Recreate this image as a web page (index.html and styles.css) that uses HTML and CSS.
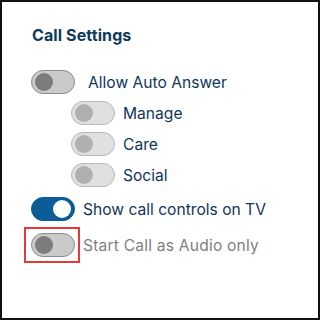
FILE: index.html
```html
<!DOCTYPE html>
<html>
<head>
<meta charset="utf-8">
<link rel="stylesheet" href="styles.css">
</head>
<body>
<div class="frame">
  <h2 class="title">Call Settings</h2>
  <div class="row row-first">
    <span class="toggle"><span class="knob"></span></span>
    <span class="label label-wide">Allow Auto Answer</span>
  </div>
  <div class="row sub">
    <span class="toggle disabled"><span class="knob"></span></span>
    <span class="label">Manage</span>
  </div>
  <div class="row sub">
    <span class="toggle disabled"><span class="knob"></span></span>
    <span class="label">Care</span>
  </div>
  <div class="row sub">
    <span class="toggle disabled"><span class="knob"></span></span>
    <span class="label">Social</span>
  </div>
  <div class="row row-show">
    <span class="toggle on"><span class="knob"></span></span>
    <span class="label">Show call controls on TV</span>
  </div>
  <div class="row row-audio">
    <span class="highlight"><span class="toggle"><span class="knob"></span></span></span>
    <span class="label muted">Start Call as Audio only</span>
  </div>
</div>
</body>
</html>
```
FILE: styles.css
```css
html, body {
  margin: 0;
  padding: 0;
  background: #ffffff;
}
.frame {
  box-sizing: border-box;
  width: 320px;
  height: 320px;
  border: 2px solid #111111;
  padding: 0 0 0 29px;
  font-family: "Inter", "DejaVu Sans", sans-serif;
  color: #0f3556;
}
.title {
  margin: 23px 0 0 1px;
  font-size: 16px;
  line-height: 20px;
  font-weight: 700;
  letter-spacing: 0.1px;
  color: #0e3a5c;
}
.row {
  display: flex;
  align-items: center;
  height: 24px;
  margin-top: 7px;
}
.row-first { margin-top: 25px; }
.sub { padding-left: 40px; }
.row-show { margin-top: 10px; }
.row-audio { margin-top: 12px; }
.toggle {
  box-sizing: border-box;
  position: relative;
  flex: none;
  width: 44px;
  height: 24px;
  border-radius: 12px;
  border: 1px solid #8c8c8c;
  background: #cacaca;
}
.knob {
  position: absolute;
  left: 3px;
  top: 2px;
  width: 18px;
  height: 18px;
  border-radius: 50%;
  background: #7c7c7c;
}
.toggle.disabled {
  border-color: #b8b8b8;
  background: #e0e0e0;
}
.toggle.disabled .knob {
  background: #b0b0b0;
}
.toggle.on {
  border-color: #0b5c97;
  background: #0b5c97;
}
.toggle.on .knob {
  left: auto;
  right: 3px;
  background: #ffffff;
}
.label {
  margin-left: 8px;
  font-size: 15.6px;
  color: #10365a;
  white-space: nowrap;
}
.label-wide { margin-left: 13px; }
.muted { color: #7f7f7f; letter-spacing: 0.2px; }
.highlight {
  display: inline-flex;
  flex: none;
  border: 2px solid #e53935;
  padding: 4px 3px 4px 5px;
  margin: -6px -5px -6px -7px;
}
```
